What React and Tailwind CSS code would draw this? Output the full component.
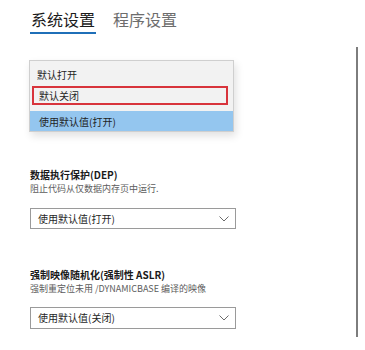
import React from "react";

const font = { fontFamily: '"Noto Sans CJK SC", "Noto Sans", sans-serif' };

function Chevron() {
  return (
    <svg width="10" height="6" viewBox="0 0 10 6" fill="none">
      <path d="M0.5 0.5 L5 5 L9.5 0.5" stroke="#6b6b6b" strokeWidth="1" />
    </svg>
  );
}

function Select({ value, className }) {
  return (
    <div
      className={
        "w-[206px] flex items-center justify-between border border-[#9a9a9a] bg-white pl-[7px] pr-[6px] " +
        className
      }
    >
      <span className="text-[10px] text-[#1f1f1f] leading-none">{value}</span>
      <Chevron />
    </div>
  );
}

export default function App() {
  return (
    <div
      className="w-[365px] h-[350px] bg-white flex overflow-hidden"
      style={font}
    >
      <div className="flex-1 pl-[30px]">
        {/* tabs */}
        <div className="flex gap-[17px] pt-[9px]">
          <div className="flex flex-col">
            <span className="text-[16px] leading-[20px] text-[#1b1b1b] px-[1px]">
              系统设置
            </span>
            <div className="h-[2px] mt-[3px] bg-[#1f6fb8]" />
          </div>
          <span className="text-[16px] leading-[20px] text-[#6d6d6d]">
            程序设置
          </span>
        </div>

        {/* open dropdown list */}
        <div className="mt-[26px] -ml-[1px] w-[205px] bg-[#f2f2f2] border border-[#cfcfcf] shadow-[2px_4px_8px_rgba(0,0,0,0.12)] flex flex-col">
          <div className="h-[24px] flex items-center pt-[3px] pl-[7px] text-[10px] text-[#1f1f1f]">
            默认打开
          </div>
          <div className="mt-[1px] ml-[2px] mr-[5px] h-[19px] flex items-center pl-[5px] border-2 border-[#d8343c] text-[10px] text-[#1f1f1f]">
            默认关闭
          </div>
          <div className="mt-[6px] h-[20px] flex items-center pl-[9px] bg-[#94c6ef] text-[10px] text-[#1f1f1f]">
            使用默认值(打开)
          </div>
        </div>

        {/* DEP */}
        <div className="mt-[36px] text-[10px] leading-[14px] font-bold text-[#1a1a1a]">
          数据执行保护(DEP)
        </div>
        <div className="text-[9px] leading-[14px] text-[#5c5c5c]">
          阻止代码从仅数据内存页中运行.
        </div>
        <Select value="使用默认值(打开)" className="mt-[12px] h-[21px]" />

        {/* ASLR */}
        <div className="mt-[39px] text-[10px] leading-[14px] font-bold text-[#1a1a1a]">
          强制映像随机化(强制性 ASLR)
        </div>
        <div className="text-[9px] leading-[14px] text-[#5c5c5c]">
          强制重定位未用 /DYNAMICBASE 编译的映像
        </div>
        <Select value="使用默认值(关闭)" className="mt-[11px] h-[22px]" />
      </div>

      {/* scrollbar line */}
      <div className="pt-[47px] pr-[7px]">
        <div className="w-[2px] h-[290px] bg-[#7d7d7d]" />
      </div>
    </div>
  );
}
